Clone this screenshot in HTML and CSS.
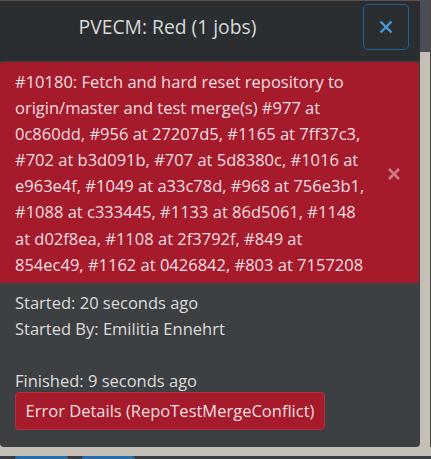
FILE: index.html
```html
<!DOCTYPE html>
<html>
<head>
<meta charset="utf-8">
<link rel="stylesheet" href="styles.css">
</head>
<body>
<div class="page">
  <div class="modal">
    <div class="header">
      <div class="title">PVECM: Red (1 jobs)</div>
      <button class="close-btn" aria-label="Close">
        <svg width="14" height="14" viewBox="0 0 14 14"><path d="M1.5 1.5 L12.5 12.5 M12.5 1.5 L1.5 12.5" stroke="#4a98dc" stroke-width="2.4" stroke-linecap="butt"/></svg>
      </button>
    </div>
    <div class="body">
      <div class="alert">
        <div class="alert-text">#10180: Fetch and hard reset repository to<br>origin/master and test merge(s) #977 at<br>0c860dd, #956 at 27207d5, #1165 at 7ff37c3,<br>#702 at b3d091b, #707 at 5d8380c, #1016 at<br>e963e4f, #1049 at a33c78d, #968 at 756e3b1,<br>#1088 at c333445, #1133 at 86d5061, #1148<br>at d02f8ea, #1108 at 2f3792f, #849 at<br>854ec49, #1162 at 0426842, #803 at 7157208</div>
        <div class="alert-close">
          <svg width="14" height="14" viewBox="0 0 14 14"><path d="M2 2 L12 12 M12 2 L2 12" stroke="#cf7a86" stroke-width="2.6"/></svg>
        </div>
      </div>
      <div class="info">
        <div class="line">Started: 20 seconds ago</div>
        <div class="line">Started By: Emilitia Ennehrt</div>
        <div class="line">&nbsp;</div>
        <div class="line">Finished: 9 seconds ago</div>
        <button class="err-btn">Error Details (RepoTestMergeConflict)</button>
      </div>
    </div>
  </div>
  <div class="scroll">
    <div class="thumb"></div>
    <div class="track"></div>
  </div>
</div>
<div class="footer">
  <div class="blob b1"></div>
  <div class="blob b2"></div>
</div>
</body>
</html>
```

FILE: styles.css
```css
html, body {
  margin: 0;
  padding: 0;
}
body {
  background: #c4bfb7;
  font-family: "Open Sans", "Noto Sans", sans-serif;
  width: 431px;
  height: 459px;
  overflow: hidden;
}
.page {
  display: flex;
  height: 447px;
}
.modal {
  width: 420px;
  display: flex;
  flex-direction: column;
  background: #3c4043;
  border-top: 1px solid #5c534a;
  border-radius: 0 0 4px 4px;
  overflow: hidden;
}
.header {
  height: 60px;
  background: #2b2e31;
  display: flex;
  align-items: flex-start;
  flex-shrink: 0;
}
.title {
  width: 335px;
  text-align: center;
  color: #d8d8d8;
  font-size: 19.3px;
  line-height: 20px;
  padding-top: 16px;
}
.close-btn {
  margin-left: 28px;
  margin-top: 3px;
  width: 46px;
  height: 46px;
  border: 1px solid #1e5f9e;
  border-radius: 5px;
  background: transparent;
  display: flex;
  align-items: center;
  justify-content: center;
  padding: 0;
}
.body {
  flex: 1;
  display: flex;
  flex-direction: column;
}
.alert {
  background: #a51b2c;
  border-radius: 4px 4px 0 0;
  display: flex;
  align-items: center;
  padding: 7px 0 5px 15px;
  margin-top: 1px;
  margin-right: 1px;
}
.alert-text {
  color: #f1dfe1;
  font-size: 16.5px;
  line-height: 26.1px;
  white-space: nowrap;
  width: 372px;
}
.alert-close {
  display: flex;
  padding-left: 0;
  padding-top: 2px;
}
.info {
  padding: 7px 15px 0 15px;
  color: #dcdcdc;
  font-size: 16.5px;
}
.line {
  line-height: 26px;
}
.err-btn {
  margin-top: -2px;
  height: 38px;
  width: 310px;
  background: #a51b2c;
  border: 1px solid #b3303e;
  border-radius: 4px;
  color: #efdfe1;
  font-family: "Open Sans", "Noto Sans", sans-serif;
  font-size: 16.5px;
  padding: 0;
}
.scroll {
  width: 11px;
  display: flex;
  flex-direction: column;
  border-right: 1px solid #4a4640;
  box-sizing: border-box;
}
.thumb {
  height: 52px;
  background: #4b4f53;
}
.track {
  flex: 1;
  background: #c4bfb7;
}
.footer {
  margin-top: 9px;
  height: 3px;
  background: #3a3e42;
  display: flex;
  gap: 14px;
  padding-left: 15px;
}
.blob {
  width: 53px;
  height: 3px;
  background: #2a6ca8;
  border-radius: 3px 3px 0 0;
}
```
